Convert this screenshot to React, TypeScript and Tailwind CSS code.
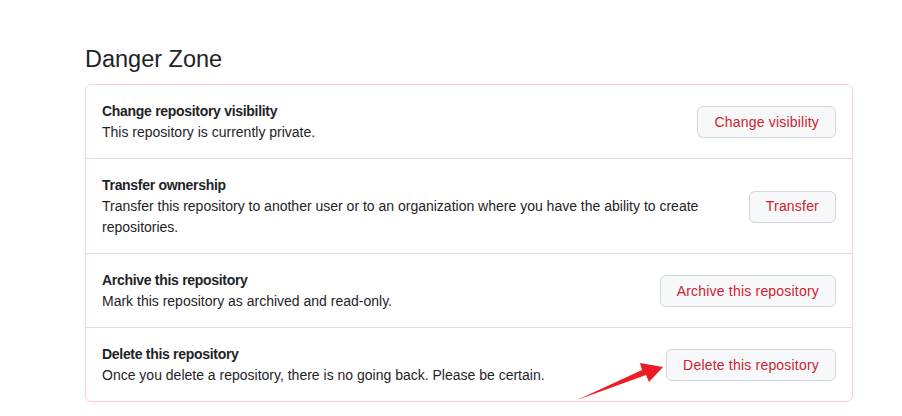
const rows = [
  {
    title: "Change repository visibility",
    desc: "This repository is currently private.",
    action: "Change visibility",
  },
  {
    title: "Transfer ownership",
    desc: "Transfer this repository to another user or to an organization where you have the ability to create repositories.",
    action: "Transfer",
  },
  {
    title: "Archive this repository",
    desc: "Mark this repository as archived and read-only.",
    action: "Archive this repository",
  },
  {
    title: "Delete this repository",
    desc: "Once you delete a repository, there is no going back. Please be certain.",
    action: "Delete this repository",
  },
];

const DangerZone = () => {
  return (
    <div className="min-h-[416px] bg-white pl-[85px] pt-[41px] font-['Liberation_Sans',Arial,sans-serif] text-[#1f2328]">
      <h2 className="mb-[7px] text-[23.5px] leading-[36px] font-normal">Danger Zone</h2>
      <div className="relative w-[768px] rounded-md border border-[#ffcdd2]">
        {rows.map((row, i) => (
          <div
            key={row.title}
            className={`flex items-center justify-between gap-6 px-4 pt-4 pb-[15px] ${i > 0 ? "border-t border-[#d8dee4]" : ""}`}
          >
            <div className="max-w-[610px] text-[14px] leading-[21px]">
              <div className="font-semibold tracking-[-0.3px]">{row.title}</div>
              <div>{row.desc}</div>
            </div>
            <button className="h-8 shrink-0 rounded-md border border-[#d0d7de] bg-[#f6f8fa] px-4 text-[14px] font-medium tracking-[0.2px] text-[#cf222e]">
              {row.action}
            </button>
          </div>
        ))}
        {/* annotation arrow */}
        <svg
          className="pointer-events-none absolute left-[490px] top-[275px]"
          width="96"
          height="50"
          viewBox="0 0 96 50"
        >
          <polygon points="1,40 66,10 64,3 87,7 73,22 70,15" fill="#ec1c24" />
        </svg>
      </div>
    </div>
  );
};

export default function App() {
  return <DangerZone />;
}
